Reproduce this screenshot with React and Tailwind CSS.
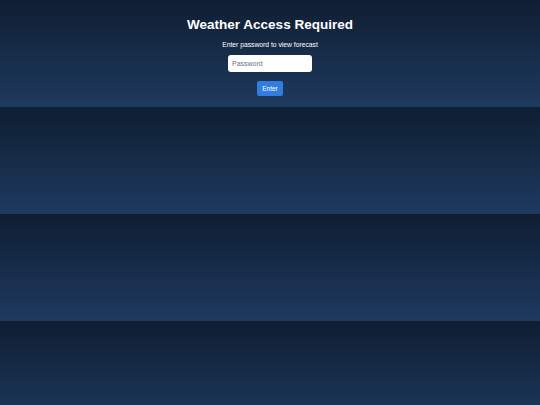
export default function App() {
  return (
    <div
      className="min-h-screen bg-[linear-gradient(180deg,#0f1e32,#1e3a5f)] bg-[length:100%_107px] bg-repeat text-white"
      style={{ fontFamily: '"Liberation Sans", Arial, sans-serif' }}
    >
      <div className="flex flex-col items-center pt-[17px]">
        <h1 className="text-[13.5px] font-bold leading-[16px]">Weather Access Required</h1>
        <p className="mt-[7px] text-[6.75px] leading-[10px]">Enter password to view forecast</p>
        <input
          type="password"
          placeholder="Password"
          className="mt-[5px] h-[17px] w-[84px] rounded-[3px] bg-white px-[4px] text-[7px] text-gray-800 placeholder:text-gray-500 outline-none"
        />
        <button className="mt-[9px] h-[15px] w-[26px] rounded-[2px] bg-[#2f7de1] text-[6.5px] text-white">
          Enter
        </button>
      </div>
    </div>
  );
}
